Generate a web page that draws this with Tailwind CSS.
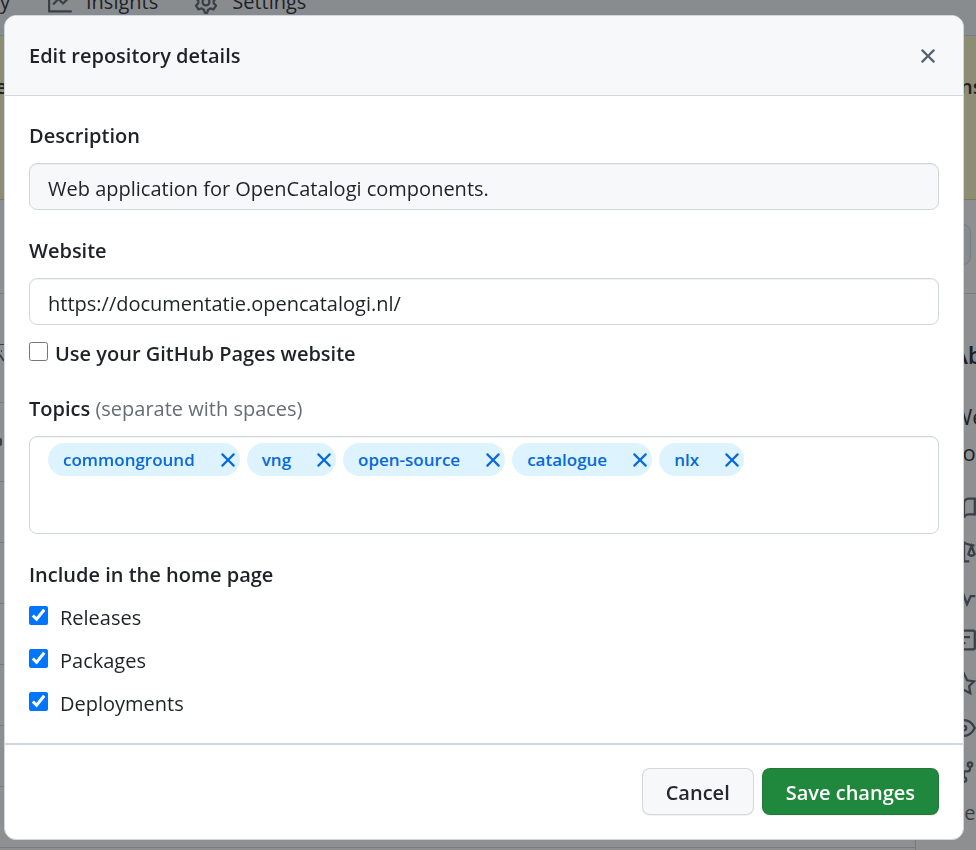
<!DOCTYPE html>
<html lang="en">
<head>
<meta charset="utf-8">
<meta name="viewport" content="width=device-width, initial-scale=1">
<title>Edit repository details</title>
<script src="https://cdn.jsdelivr.net/npm/@tailwindcss/browser@4"></script>
</head>
<body class="h-screen overflow-hidden bg-white font-['Open_Sans','Noto_Sans',sans-serif] text-[20px] leading-[30px] text-[#1f2328]">

<!-- Repository page behind the dialog -->
<div class="h-screen overflow-hidden" aria-hidden="true">
  <nav class="flex h-9 items-start overflow-hidden border-b border-[#d0d7de] bg-[#f6f8fa]">
    <div class="-mt-[13px] flex items-center">
      <span class="flex w-12 justify-start"><span>y</span></span>
      <span class="flex items-center gap-[14px]">
        <svg class="size-6 fill-[#57606a]" viewBox="0 0 16 16"><path d="M1.5 1.75V13.5h13.75a.75.75 0 0 1 0 1.5H.75a.75.75 0 0 1-.75-.75V1.75a.75.75 0 0 1 1.5 0Zm14.28 2.53-5.25 5.25a.75.75 0 0 1-1.06 0L7 7.06 4.28 9.78a.751.751 0 0 1-1.06-1.06l3.25-3.25a.75.75 0 0 1 1.06 0L10 7.94l4.72-4.72a.751.751 0 0 1 1.06 1.06Z"/></svg>
        Insights</span>
      <span class="ml-9 flex items-center gap-[14px]">
        <svg class="size-6 fill-none stroke-[#57606a] stroke-[1.5]" viewBox="0 0 16 16"><path stroke-linejoin="round" d="M7.200.8H8.800L9.400 2.900L10.900 3.700L13 3.100L14.700 5.600L13.100 7.200V8.800L14.700 10.400L13 12.900L10.900 12.300L9.400 13.100L8.800 15.200H7.200L6.600 13.100L5.100 12.300L3 12.900L1.300 10.400L2.900 8.800V7.200L1.300 5.600L3 3.100L5.100 3.700L6.600 2.900Z"/><circle cx="8" cy="8" r="2.300"/></svg>
        Settings</span>
    </div>
  </nav>
  <div class="flex h-[164px] items-start justify-between border-b border-[#d4b256]/60 bg-[#fff8c5] pt-9 font-semibold">
    <span class="flex w-[7px] justify-end">e</span>
    <span class="w-4">ns</span>
  </div>
  <div class="flex h-[94px] justify-end border-b border-[#d0d7de] pt-6 pr-[5px]">
    <div class="h-[41px] w-20 rounded-lg border border-[#d0d7de] bg-[#f6f8fa]"></div>
  </div>
  <div class="flex h-[640px]">
    <div class="flex w-[916px] shrink-0 flex-col border-r border-[#d0d7de] pt-[50px]">
      <div class="h-[59px] border-y border-y-[#d0d7de] border-t-[#57606a]">
        <svg class="h-5 w-1 fill-none stroke-[#57606a] stroke-2" viewBox="0 0 4 20"><path d="M0 10 4 16M1 6h1"/></svg>
      </div>
      <div class="flex h-[79px] items-center border-b border-[#d0d7de]">
        <i class="h-2 w-[2px] rounded-r-full bg-[#57606a]"></i>
      </div>
      <div class="h-[61px] border-b border-[#d0d7de]"></div>
      <div class="h-[61px] border-b border-[#d0d7de]"></div>
      <div class="h-[61px] border-b border-[#d0d7de]"></div>
      <div class="h-[61px] border-b border-[#d0d7de]"></div>
      <div class="h-[61px] border-b border-[#d0d7de]"></div>
      <div class="h-[61px] border-b border-[#d0d7de]"></div>
    </div>
    <aside class="w-[60px] shrink-0 overflow-hidden pt-[46px] pl-9 whitespace-nowrap text-[#1f2328]">
      <p class="text-2xl leading-[30px] font-semibold">Ab</p>
      <p class="mt-7 text-[22px] leading-9">We<br>co</p>
      <div class="mt-[26px] flex w-6 flex-col gap-5 [&_svg]:size-6 [&_svg]:shrink-0 [&_svg]:fill-none [&_svg]:stroke-[#57606a] [&_svg]:stroke-[1.5]">
        <svg viewBox="0 0 16 16"><path d="M8 4.500Q7.500 2 5 1.800H.8v10.500h4.500Q7.500 12.500 8 14.500Q8.500 12.500 10.700 12.300h4.500V1.800H11Q8.500 2 8 4.500v10"/></svg>
        <svg viewBox="0 0 16 16"><path d="M8 .8v13.500M4.500 14.300h7M1 3.500h2L8 2l5 1.500h2M3 4 .9 9.500Q3 11.500 5.100 9.500ZM13 4l-2.100 5.500Q13 11.500 15.100 9.500Z"/></svg>
        <svg viewBox="0 0 16 16"><path d="M.5 8h3L6 2.500l4 11L12.500 8h3"/></svg>
        <svg viewBox="0 0 16 16"><rect x=".8" y="1.800" width="14.400" height="12.400" rx="1"/><path d="M4 6h8M4 10h5"/></svg>
        <svg viewBox="0 0 16 16"><path d="m8 1.200 2.100 4.300 4.700.7-3.400 3.300.8 4.700L8 12l-4.200 2.200.8-4.700L1.200 6.200l4.700-.7Z"/></svg>
        <svg viewBox="0 0 16 16"><path d="M.8 8Q3.500 2.800 8 2.800T15.200 8Q12.500 13.200 8 13.200T.8 8Z"/><circle cx="8" cy="8" r="1.500"/></svg>
        <svg viewBox="0 0 16 16"><circle cx="4" cy="3" r="1.500"/><circle cx="12" cy="3" r="1.500"/><circle cx="8" cy="13" r="1.500"/><path d="M4 4.500V6q0 1.500 1.500 1.500h5Q12 7.500 12 6V4.500M8 7.500v4"/></svg>
      </div>
      <p class="mt-[14px] text-[#57606a]">Re</p>
    </aside>
  </div>
</div>

<!-- Backdrop and dialog -->
<div class="fixed inset-0 bg-[#1b1f24]/50 pt-[15px] pr-3 pb-[10px] pl-1">
  <form role="dialog" aria-labelledby="title" class="overflow-hidden rounded-xl border border-[#d0d7de] bg-white" onsubmit="return false">
    <header class="flex h-20 items-center justify-between border-b border-[#d0d7de] bg-[#f6f8fa] pr-[23px] pl-6">
      <h1 id="title" class="font-semibold">Edit repository details</h1>
      <button type="button" aria-label="Close dialog" class="size-6">
        <svg class="size-6 fill-[#57606a]" viewBox="0 0 16 16"><use href="#x"/></svg>
      </button>
    </header>

    <div class="px-6 pt-[25px] pb-6">
      <label for="description" class="mb-3 block font-semibold">Description</label>
      <input id="description" type="text" value="Web application for OpenCatalogi components." class="block h-[47px] w-full rounded-lg border border-[#d0d7de] bg-[#f6f8fa] px-[18px] pt-[3px] text-[#1f2328] inset-shadow-2xs">

      <label for="website" class="mt-[26px] mb-3 block font-semibold">Website</label>
      <input id="website" type="text" value="https://documentatie.opencatalogi.nl/" class="block h-[47px] w-full rounded-lg border border-[#d0d7de] bg-white px-[18px] pt-[3px] inset-shadow-2xs">

      <div class="mt-[14px] flex items-start gap-[7px]">
        <input id="pages" type="checkbox" class="mt-[3px] size-[19px]">
        <label for="pages" class="font-semibold">Use your GitHub Pages website</label>
      </div>

      <label for="topics" class="mt-[25px] mb-3 block font-semibold">Topics <span class="font-normal text-[#656d76]">(separate with spaces)</span></label>
      <div class="flex min-h-[98px] flex-wrap content-start gap-[7px] rounded-lg border border-[#d0d7de] px-[18px] py-[6px] text-[17px] font-semibold text-[#0969da] inset-shadow-2xs [&_button]:ml-[21px] [&_button]:size-6 [&_span]:flex [&_span]:h-[33px] [&_span]:items-center [&_span]:rounded-full [&_span]:bg-[#ddf4ff] [&_span]:pl-[15px] [&_svg]:size-6 [&_svg]:fill-[#0969da]">
        <span>commonground<button type="button" aria-label="Remove commonground"><svg viewBox="0 0 16 16"><use href="#x"/></svg></button></span>
        <span>vng<button type="button" aria-label="Remove vng"><svg viewBox="0 0 16 16"><use href="#x"/></svg></button></span>
        <span>open-source<button type="button" aria-label="Remove open-source"><svg viewBox="0 0 16 16"><use href="#x"/></svg></button></span>
        <span>catalogue<button type="button" aria-label="Remove catalogue"><svg viewBox="0 0 16 16"><use href="#x"/></svg></button></span>
        <span>nlx<button type="button" aria-label="Remove nlx"><svg viewBox="0 0 16 16"><use href="#x"/></svg></button></span>
        <input id="topics" type="text" class="h-[33px] w-24 outline-none">
      </div>

      <fieldset class="mt-[26px]">
        <legend class="mb-[13px] font-semibold">Include in the home page</legend>
        <div class="flex flex-col gap-[13px]">
          <div class="flex items-start gap-3"><input id="releases" type="checkbox" checked class="mt-[3px] size-[19px]"><label for="releases">Releases</label></div>
          <div class="flex items-start gap-3"><input id="packages" type="checkbox" checked class="mt-[3px] size-[19px]"><label for="packages">Packages</label></div>
          <div class="flex items-start gap-3"><input id="deployments" type="checkbox" checked class="mt-[3px] size-[19px]"><label for="deployments">Deployments</label></div>
        </div>
      </fieldset>
    </div>

    <footer class="flex justify-end gap-2 border-t-2 border-[#d0d7de] px-6 pt-[23px] pb-6 font-semibold">
      <button type="button" class="h-[47px] rounded-lg border border-[#1f2328]/15 bg-[#f6f8fa] px-[23px] pt-[3px] text-[#24292f] shadow-2xs">Cancel</button>
      <button type="submit" class="h-[47px] rounded-lg border border-[#1f2328]/15 bg-[#1f883d] px-[23px] pt-[3px] text-white shadow-2xs">Save changes</button>
    </footer>
  </form>
</div>

<svg class="hidden" aria-hidden="true"><defs><path id="x" d="M3.720 3.720a.75.75 0 0 1 1.060 0L8 6.940l3.220-3.220a.75.75 0 1 1 1.060 1.060L9.060 8l3.220 3.220a.75.75 0 1 1-1.060 1.060L8 9.060l-3.220 3.220a.75.75 0 0 1-1.060-1.060L6.940 8 3.720 4.780a.75.75 0 0 1 0-1.060Z"/></defs></svg>
</body>
</html>
